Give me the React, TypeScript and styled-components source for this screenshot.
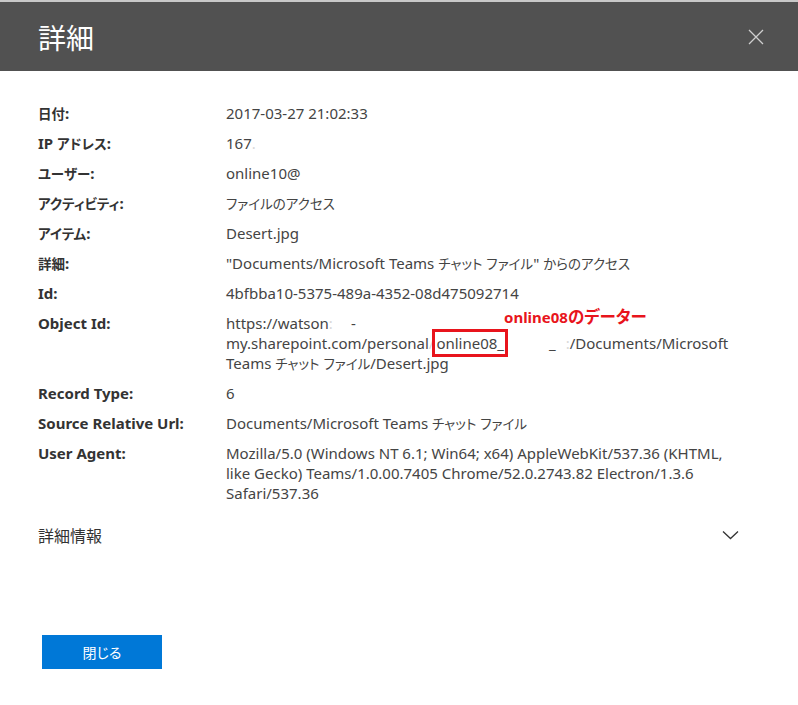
import * as React from 'react'
import styled, { createGlobalStyle } from 'styled-components'

const GlobalStyle = createGlobalStyle`
  html, body {
    margin: 0;
    padding: 0;
    background: #ffffff;
  }
  body {
    font-family: "Noto Sans", "Noto Sans CJK JP", sans-serif;
  }
`

const Panel = styled.div`
  width: 798px;
  height: 705px;
  display: flex;
  flex-direction: column;
  background: #ffffff;
  border-top: 2px solid #c8c8c8;
  box-sizing: border-box;
`

const Header = styled.header`
  height: 69px;
  background: #515151;
  display: flex;
  align-items: center;
  justify-content: space-between;
  padding: 0 32px 0 38px;
  flex-shrink: 0;
`

const Title = styled.h1`
  margin: 0;
  color: #ffffff;
  font-size: 28px;
  font-weight: 400;
  font-family: "Noto Sans CJK JP", sans-serif;
`

const CloseButton = styled.button`
  background: none;
  border: 0;
  padding: 0;
  width: 20px;
  height: 20px;
  display: flex;
  align-items: center;
  justify-content: center;
  cursor: pointer;
`

const Body = styled.div`
  padding: 32px 62px 0 38px;
  display: flex;
  flex-direction: column;
`

const Fields = styled.dl`
  margin: 0;
  display: grid;
  grid-template-columns: 188px 1fr;
  row-gap: 10px;
  font-size: 15px;
  line-height: 20px;
`

const Label = styled.dt`
  margin: 0;
  color: #333333;
  font-weight: 700;
`

const Value = styled.dd`
  margin: 0;
  color: #444444;
  position: relative;
`

// Japanese runs are set narrower, like Meiryo UI in the original
const Ja = styled.span`
  font-family: "Noto Sans CJK JP", sans-serif;
  font-size: 13.5px;
  line-height: 1;
  font-feature-settings: "palt";
`

const Line = styled.span`
  display: block;
  white-space: nowrap;
`

const Faint = styled.span`
  color: #d8d8d8;
`

const Gap = styled.span<{ $w: number }>`
  display: inline-block;
  width: ${(p) => p.$w}px;
`

const Highlight = styled.span`
  outline: 3px solid #e8141c;
  padding: 1px 1px;
  margin-left: 1px;
`

const Note = styled.span`
  position: absolute;
  left: 278px;
  top: -6px;
  color: #e8141c;
  font-weight: 700;
  font-size: 15px;
  white-space: nowrap;

  ${Ja} {
    font-size: 16.5px;
  }
`

const MoreRow = styled.div`
  margin-top: 21px;
  margin-right: -3px;
  display: flex;
  align-items: center;
  justify-content: space-between;
`

const MoreLabel = styled.span`
  color: #333333;
  font-size: 16px;
  line-height: 22px;
  font-family: "Noto Sans CJK JP", sans-serif;
`

const Footer = styled.div`
  margin-top: 89px;
  padding-left: 42px;
`

const PrimaryButton = styled.button`
  width: 120px;
  height: 34px;
  background: #0078d7;
  border: 0;
  color: #ffffff;
  font-size: 14px;
  font-family: "Noto Sans CJK JP", sans-serif;
  font-feature-settings: "palt";
  cursor: pointer;
`

const jp = (text: string) =>
  text
    .split(/([\u3000-\u30ff\u4e00-\u9fff\uff00-\uffef]+)/)
    .map((part, i) => (i % 2 === 1 ? <Ja key={i}>{part}</Ja> : part))

const rows: Array<[string, React.ReactNode]> = [
  ['日付:', '2017-03-27 21:02:33'],
  ['IP アドレス:', <>167<Faint>.</Faint></>],
  ['ユーザー:', 'online10@'],
  ['アクティビティ:', jp('ファイルのアクセス')],
  ['アイテム:', 'Desert.jpg'],
  ['詳細:', jp('"Documents/Microsoft Teams チャット ファイル" からのアクセス')],
  ['Id:', '4bfbba10-5375-489a-4352-08d475092714'],
  [
    'Object Id:',
    <>
      <Note>online08{jp('のデーター')}</Note>
      <Line>
        https://watson<Faint>:</Faint>
        <Gap $w={18} />-
      </Line>
      <Line>
        my.sharepoint.com/personal<Faint>/</Faint>
        <Highlight>online08_</Highlight>
        <Gap $w={44} />_<Gap $w={10} />
        <Faint>:</Faint>/Documents/Microsoft
      </Line>
      <Line>Teams {jp('チャット ファイル')}/Desert.jpg</Line>
    </>,
  ],
  ['Record Type:', '6'],
  ['Source Relative Url:', jp('Documents/Microsoft Teams チャット ファイル')],
  [
    'User Agent:',
    'Mozilla/5.0 (Windows NT 6.1; Win64; x64) AppleWebKit/537.36 (KHTML, like Gecko) Teams/1.0.00.7405 Chrome/52.0.2743.82 Electron/1.3.6 Safari/537.36',
  ],
]

export default function App() {
  return (
    <>
      <GlobalStyle />
      <Panel>
        <Header>
          <Title>詳細</Title>
          <CloseButton aria-label="閉じる">
            <svg width="16" height="16" viewBox="0 0 16 16">
              <path d="M1 1L15 15M15 1L1 15" stroke="#cfcfcf" strokeWidth="1.3" fill="none" />
            </svg>
          </CloseButton>
        </Header>
        <Body>
          <Fields>
            {rows.map(([label, value]) => (
              <React.Fragment key={label}>
                <Label>{jp(label)}</Label>
                <Value>{value}</Value>
              </React.Fragment>
            ))}
          </Fields>
          <MoreRow>
            <MoreLabel>詳細情報</MoreLabel>
            <svg width="17" height="10" viewBox="0 0 17 10">
              <path d="M1 1.5L8.5 8.5L16 1.5" stroke="#333" strokeWidth="1.3" fill="none" />
            </svg>
          </MoreRow>
        </Body>
        <Footer>
          <PrimaryButton>閉じる</PrimaryButton>
        </Footer>
      </Panel>
    </>
  )
}
